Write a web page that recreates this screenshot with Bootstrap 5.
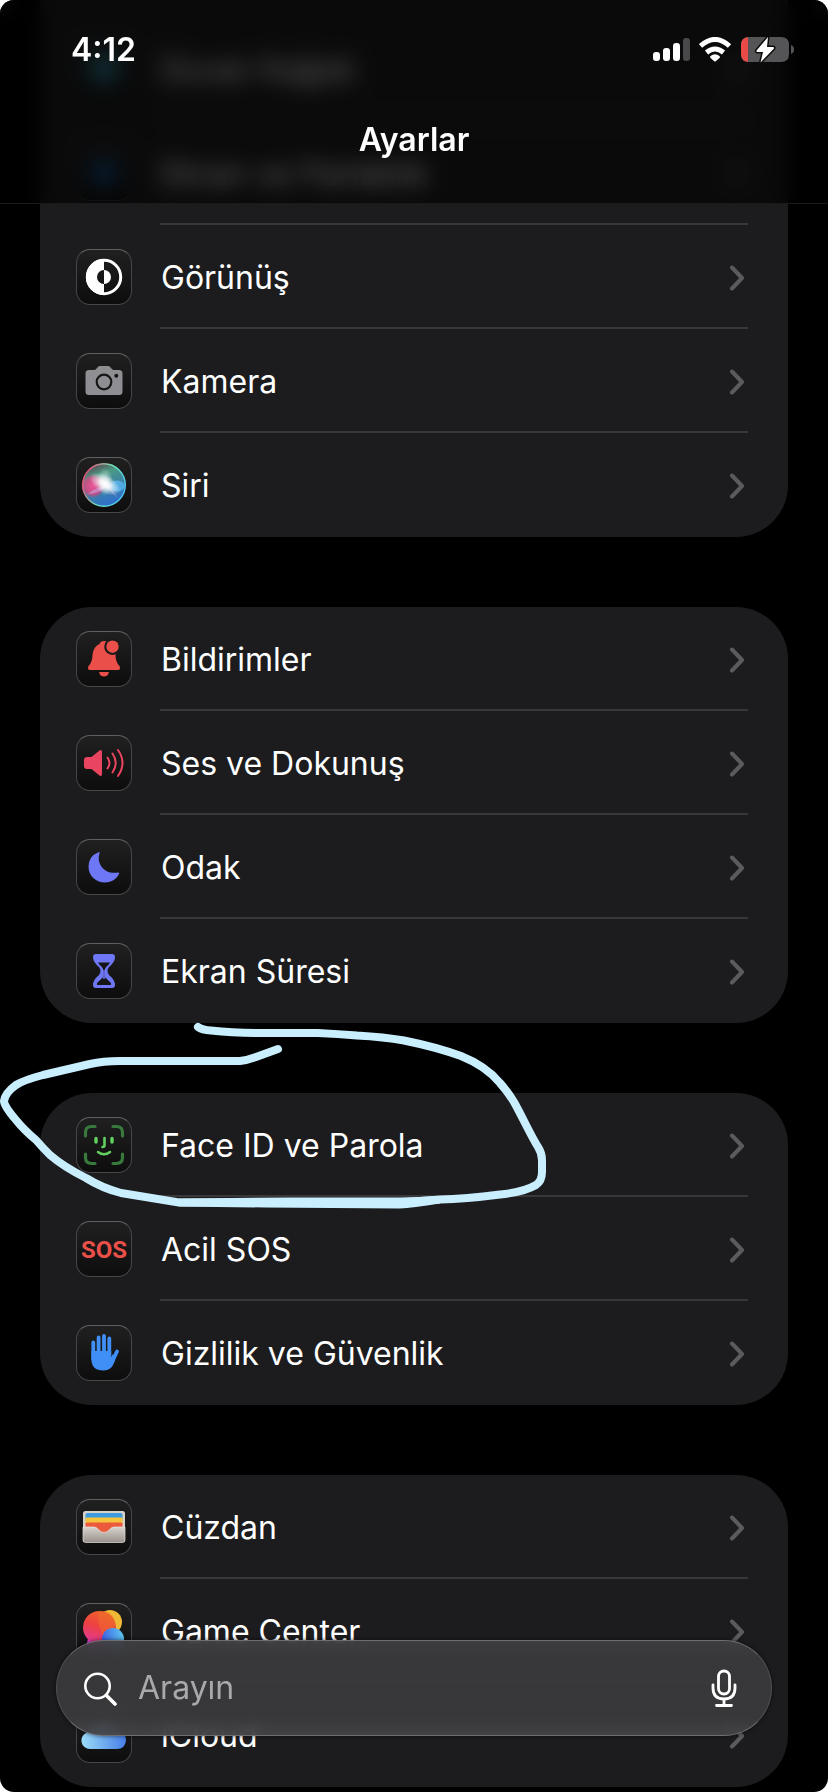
<!DOCTYPE html>
<html lang="tr" data-bs-theme="dark">
<head>
    <meta charset="UTF-8">
    <meta name="viewport" content="width=device-width, initial-scale=1">
    <title>Ayarlar</title>
    <link href="https://cdn.jsdelivr.net/npm/bootstrap@5.3.0/dist/css/bootstrap.min.css" rel="stylesheet">
    <style>
        html { background: #fff; }
        body { background: #fff; font-family: Inter, "Noto Sans", sans-serif; font-size: 32px; line-height: 40px; color: #fff; }
        .screen { background: #000; border-radius: 14px; min-height: 100vh; padding: 0 40px 5px; }
        .topbar { background: rgba(0, 0, 0, .62); -webkit-backdrop-filter: blur(11px); backdrop-filter: blur(11px); border-bottom: 1px solid #1a1a1b; border-radius: 14px 14px 0 0; padding: 30px 33px 43px 71px; }
        .topbar h1 { font-size: 32px; line-height: 40px; font-weight: 600; margin: 50px 38px 0 0; text-align: center; }
        .clock { font-weight: 600; }
        .group { background: #1c1c1e; border-radius: 52px; margin-bottom: 70px; }
        .group-first { border-radius: 0 0 52px 52px; padding-top: 17px; }
        .group-end { margin-bottom: 0; }
        .setting { height: 104px; padding: 0 40px 0 36px; gap: 28px; color: #fff; text-decoration: none; }
        .setting:hover { color: #fff; }
        .setting-body { border-bottom: 2px solid #38383a; padding: 3px 3px 0 1px; }
        .setting:last-child .setting-body { border-color: transparent; }
        .tile { width: 56px; height: 56px; border-radius: 14px; border: 1px solid #464648; border-top-color: #606062; background: linear-gradient(#202020, #0d0d0d); flex: none; }
        .tile svg { display: block; margin: -1px; width: 56px; height: 56px; }
        .sos { font: bold 24px "Liberation Sans Narrow", Roboto, sans-serif; fill: #eb4f49; }
        .marker { position: absolute; left: -40px; top: -77px; pointer-events: none; z-index: 2; }
        .search { height: 96px; margin: 0 56px 56px; padding: 0 33px 0 27px; gap: 21px; border-radius: 48px; border: 1px solid #505052; border-top-color: #6e6e70; border-bottom-color: #6e6e70; background: linear-gradient(rgba(64, 64, 66, .93), rgba(58, 58, 60, .94) 20%, rgba(58, 58, 60, .94) 80%, rgba(68, 68, 70, .93)); -webkit-backdrop-filter: blur(6px); backdrop-filter: blur(6px); box-shadow: 0 0 4px rgba(0, 0, 0, .6); }
        .search input, .search input:focus { background: none; border: 0; box-shadow: none; padding: 0; font-size: 32px; line-height: 40px; color: #fff; }
        .search input::placeholder { color: #a9a9ab; }
        .search button { background: none; border: 0; padding: 0; line-height: 0; }
    </style>
</head>
<body>

<svg width="0" height="0" class="position-absolute">
    <symbol id="chevron" viewBox="0 0 16 26">
        <path d="M3 2.500L13 13L3 23.500" fill="none" stroke="#5b5b5f" stroke-width="4" stroke-linecap="round" stroke-linejoin="round"/>
    </symbol>
</svg>

<header class="topbar fixed-top">
    <div class="d-flex justify-content-between align-items-center">
        <span class="clock">4:12</span>
        <div class="d-flex align-items-center">
            <svg width="46" height="26" viewBox="0 0 46 26" aria-label="Sinyal">
                <g fill="#fff"><rect x="0" y="15" width="7" height="9" rx="3"/><rect x="10" y="11" width="7" height="13" rx="3"/><rect x="20" y="6" width="7" height="18" rx="3"/></g>
                <rect x="30" y="1" width="7" height="23" rx="3" fill="#48484a"/>
            </svg>
            <svg width="42" height="26" viewBox="0 0 42 26" aria-label="Wi-Fi">
                <g fill="none" stroke="#fff" stroke-width="5"><path d="M1.500 9Q16 -4 30.500 9"/><path d="M7.500 15.500Q16 8.500 24.500 15.500"/></g>
                <path d="M11.500 19Q16 15.500 20.500 19Q21.500 20 20.500 21L17 24Q16 25 15 24L11.500 21Q10.500 20 11.500 19Z" fill="#fff"/>
            </svg>
            <svg width="54" height="28" viewBox="0 0 54 28" aria-label="Pil">
                <path d="M8 1H40Q48 1 48 9V18Q48 26 40 26H8Q0 26 0 18V9Q0 1 8 1Z" fill="#555557"/>
                <path d="M7 1V26Q0 25 0 18V9Q0 2 7 1Z" fill="#eb4b47"/>
                <path d="M50 9Q53 10 53 13.500T50 18Z" fill="#555557"/>
                <path d="M27 1L15.500 14.500Q15 16 16.500 16H22L19.500 26.500L33 12.500Q33.500 11 32 11H26Z" fill="#fff" stroke="#0b0b0b" stroke-width="3" paint-order="stroke"/>
            </svg>
        </div>
    </div>
    <h1>Ayarlar</h1>
</header>

<main class="screen">
    <nav class="group group-first" aria-label="Genel">
        <a href="#" class="setting d-flex align-items-center">
            <span class="tile"><svg viewBox="0 0 56 56"><circle cx="28" cy="28" r="15" fill="#317f92"/></svg></span>
            <span class="setting-body d-flex align-items-center justify-content-between flex-grow-1 h-100">Duvar Kağıdı<svg width="16" height="26"><use href="#chevron"/></svg></span>
        </a>
        <a href="#" class="setting d-flex align-items-center">
            <span class="tile"><svg viewBox="0 0 56 56"><circle cx="28" cy="28" r="12" fill="#12589c"/></svg></span>
            <span class="setting-body d-flex align-items-center justify-content-between flex-grow-1 h-100">Ekran ve Parlaklık<svg width="16" height="26"><use href="#chevron"/></svg></span>
        </a>
        <a href="#" class="setting d-flex align-items-center">
            <span class="tile"><svg viewBox="0 0 56 56">
                <circle cx="28" cy="28" r="16.700" fill="none" stroke="#fff" stroke-width="3"/>
                <path d="M28 10A18 18 0 0 0 28 46V35A7 7 0 0 1 28 21Z" fill="#fff"/>
                <path d="M28 21A7 7 0 0 1 28 35Z" fill="#fff"/>
            </svg></span>
            <span class="setting-body d-flex align-items-center justify-content-between flex-grow-1 h-100">Görünüş<svg width="16" height="26"><use href="#chevron"/></svg></span>
        </a>
        <a href="#" class="setting d-flex align-items-center">
            <span class="tile"><svg viewBox="0 0 56 56">
                <path d="M13 17H18Q20 17 21 15Q22 13 24 13H32Q34 13 35 15Q36 17 38 17H43Q46.500 17 46.500 20.500V38.500Q46.500 42 43 42H13Q9.500 42 9.500 38.500V20.500Q9.500 17 13 17Z" fill="#8e8e93"/>
                <circle cx="28" cy="29" r="7.300" fill="none" stroke="#161616" stroke-width="2.200"/>
                <circle cx="40.300" cy="22.700" r="2" fill="#161616"/>
            </svg></span>
            <span class="setting-body d-flex align-items-center justify-content-between flex-grow-1 h-100">Kamera<svg width="16" height="26"><use href="#chevron"/></svg></span>
        </a>
        <a href="#" class="setting d-flex align-items-center">
            <span class="tile"><svg viewBox="0 0 56 56">
                <defs>
                    <linearGradient id="siriBase" x1="0.200" y1="0" x2="0.600" y2="1"><stop offset="0" stop-color="#5f3f4c"/><stop offset=".3" stop-color="#4a9a85"/><stop offset=".65" stop-color="#3b7fa8"/><stop offset="1" stop-color="#2d6fd0"/></linearGradient>
                    <linearGradient id="siriRim" x1="0" y1="0.300" x2="1" y2="0.700"><stop offset="0" stop-color="#f04472"/><stop offset=".5" stop-color="#6fe3b5"/><stop offset="1" stop-color="#4cc3f5"/></linearGradient>
                    <radialGradient id="siriPink"><stop offset="0" stop-color="#f0549a"/><stop offset=".7" stop-color="#d8457f" stop-opacity=".8"/><stop offset="1" stop-color="#d8457f" stop-opacity="0"/></radialGradient>
                    <radialGradient id="siriGlow"><stop offset="0" stop-color="#fff"/><stop offset=".3" stop-color="#fff" stop-opacity=".85"/><stop offset="1" stop-color="#fff" stop-opacity="0"/></radialGradient>
                </defs>
                <circle cx="28" cy="28" r="21.500" fill="url(#siriBase)"/>
                <circle cx="17" cy="29" r="12" fill="url(#siriPink)"/>
                <ellipse cx="41" cy="29" rx="7.500" ry="5.500" fill="#58b6f0" opacity=".8"/>
                <path d="M30 29Q20 30 12 37Q22 37 30 30L42 41L32 28Z" fill="#d3b4ee" opacity=".5"/>
                <ellipse cx="29" cy="27" rx="17" ry="9" fill="url(#siriGlow)" transform="rotate(30 29 27)"/>
                <ellipse cx="29" cy="25" rx="8" ry="14" fill="url(#siriGlow)" opacity=".6"/>
                <circle cx="28" cy="28" r="21.300" fill="none" stroke="url(#siriRim)" stroke-width="1.400"/>
            </svg></span>
            <span class="setting-body d-flex align-items-center justify-content-between flex-grow-1 h-100">Siri<svg width="16" height="26"><use href="#chevron"/></svg></span>
        </a>
    </nav>

    <nav class="group" aria-label="Bildirimler ve odak">
        <a href="#" class="setting d-flex align-items-center">
            <span class="tile"><svg viewBox="0 0 56 56">
                <path d="M28 10Q24.500 10 23.500 13Q17 16 16.500 24Q16.500 31 12.500 35Q11 39 14 39H42Q45 39 43.500 35Q39.500 31 39.500 24V18L32 10.500Q30 10 28 10Z" fill="#eb4f49"/>
                <path d="M23 41H33Q32 45.500 28 45.500T23 41Z" fill="#eb4f49"/>
                <circle cx="36.500" cy="15.700" r="8.300" fill="#1a1a1a"/>
                <circle cx="36.500" cy="15.700" r="6.200" fill="#eb4f49"/>
            </svg></span>
            <span class="setting-body d-flex align-items-center justify-content-between flex-grow-1 h-100">Bildirimler<svg width="16" height="26"><use href="#chevron"/></svg></span>
        </a>
        <a href="#" class="setting d-flex align-items-center">
            <span class="tile"><svg viewBox="0 0 56 56">
                <path d="M11 22H15.500L23.500 15.500Q26 14 26 17V39Q26 42 23.500 40.500L15.500 34H11Q8 34 8 31V25Q8 22 11 22Z" fill="#ea4560"/>
                <g fill="none" stroke="#ea4560" stroke-width="2" stroke-linecap="round"><path d="M31.500 22.500Q35.500 28 31.500 33.500"/><path d="M36.500 18.500Q43 28 36.500 37.500"/><path d="M42 15Q51 28 42 41"/></g>
            </svg></span>
            <span class="setting-body d-flex align-items-center justify-content-between flex-grow-1 h-100">Ses ve Dokunuş<svg width="16" height="26"><use href="#chevron"/></svg></span>
        </a>
        <a href="#" class="setting d-flex align-items-center">
            <span class="tile"><svg viewBox="0 0 56 56">
                <path d="M22.500 13.200Q24 12.700 23.500 14.500C20 25 29 36 42 33.500Q44 33.200 43 35C36 49 12.500 45 12.500 27.500Q12.800 17 22.500 13.200Z" fill="#6e78f7"/>
            </svg></span>
            <span class="setting-body d-flex align-items-center justify-content-between flex-grow-1 h-100">Odak<svg width="16" height="26"><use href="#chevron"/></svg></span>
        </a>
        <a href="#" class="setting d-flex align-items-center">
            <span class="tile"><svg viewBox="0 0 56 56">
                <path d="M20 11H36Q39 11 39 14Q39 19 33 24Q30 28 33 32Q39 37 39 42Q39 45 36 45H20Q17 45 17 42Q17 37 23 32Q26 28 23 24Q17 19 17 14Q17 11 20 11Z" fill="#6e78f7"/>
                <path d="M22 19.500H34Q33 21.500 30.500 23.500Q28.700 25.500 28.700 28V34L35 40V42H21V40L27.300 34V28Q27.300 25.500 25.500 23.500Q23 21.500 22 19.500Z" fill="#151515"/>
                <path d="M28 27V36" stroke="#6e78f7" stroke-width="1.500"/>
            </svg></span>
            <span class="setting-body d-flex align-items-center justify-content-between flex-grow-1 h-100">Ekran Süresi<svg width="16" height="26"><use href="#chevron"/></svg></span>
        </a>
    </nav>

    <div class="position-relative">
        <nav class="group" aria-label="Güvenlik">
            <a href="#" class="setting d-flex align-items-center">
                <span class="tile"><svg viewBox="0 0 56 56">
                    <g fill="none" stroke-linecap="round" stroke-width="3.200">
                        <path d="M9.500 19V15.500Q9.500 9.500 15.500 9.500H19M37 9.500H40.500Q46.500 9.500 46.500 15.500V19M46.500 37V40.500Q46.500 46.500 40.500 46.500H37M19 46.500H15.500Q9.500 46.500 9.500 40.500V37" stroke="#387a3c"/>
                        <path d="M20 21.500V25M36 21.500V25" stroke="#62d35f" stroke-width="3.400"/>
                        <path d="M28.500 21V28Q28.500 30 26.500 30M22 35Q28 39.500 34 35" stroke="#62d35f" stroke-width="2.600"/>
                    </g>
                </svg></span>
                <span class="setting-body d-flex align-items-center justify-content-between flex-grow-1 h-100">Face ID ve Parola<svg width="16" height="26"><use href="#chevron"/></svg></span>
            </a>
            <a href="#" class="setting d-flex align-items-center">
                <span class="tile"><svg viewBox="0 0 56 56"><text x="28" y="37" text-anchor="middle" class="sos">SOS</text></svg></span>
                <span class="setting-body d-flex align-items-center justify-content-between flex-grow-1 h-100">Acil SOS<svg width="16" height="26"><use href="#chevron"/></svg></span>
            </a>
            <a href="#" class="setting d-flex align-items-center">
                <span class="tile"><svg viewBox="0 0 56 56">
                    <g fill="none" stroke="#3f8ff7" stroke-width="3.800" stroke-linecap="round"><path d="M17.300 17.500V34M22.600 12.500V30M28 11V30M33.300 13.500V30"/><path d="M41 26.500L36 37"/></g>
                    <path d="M15.400 26H35.200V32L37 29L39.500 33Q37 45.500 27.500 45.500Q15.400 45.500 15.400 34Z" fill="#3f8ff7"/>
                </svg></span>
                <span class="setting-body d-flex align-items-center justify-content-between flex-grow-1 h-100">Gizlilik ve Güvenlik<svg width="16" height="26"><use href="#chevron"/></svg></span>
            </a>
        </nav>
        <!-- hand-drawn loop around Face ID -->
        <svg class="marker" width="560" height="200" viewBox="0 1016 560 200" fill="none" stroke="#c9efff" stroke-linecap="round" stroke-linejoin="round">
            <path stroke-width="8" d="M198 1027Q202 1030 211 1030.500Q232 1033 257 1033H318Q338 1034 357 1035.500Q384 1037 404 1040.500Q436 1047 461 1056Q486 1066 500 1083Q508 1092 514 1102C524 1120 530 1134 538 1147Q542 1153 542 1160V1172Q542 1181 536 1185Q524 1192 500 1194.500Q465 1199 440 1199.500L400 1202.500L179 1202.500L121 1193Q102 1188 86 1178Q64 1167 50 1155Q42 1147 36 1140Q24 1130 16 1120Q4 1106 4 1101Q5 1093 16 1085Q24 1080 43 1075L90 1064Q103 1061 120 1061H240Q248 1060 256 1057L278 1049"/>
            <path d="M179 1206.500L265 1207.500L400 1208.500Q412 1208 440 1203.500V1196Q420 1197 400 1197.500H290L179 1198.500Z" fill="#c9efff" stroke="none"/>
        </svg>
    </div>

    <nav class="group group-end" aria-label="Servisler">
        <a href="#" class="setting d-flex align-items-center">
            <span class="tile"><svg viewBox="0 0 56 56">
                <defs><linearGradient id="walletFront" x1="0" y1="0" x2="0" y2="1"><stop offset="0" stop-color="#d9d3cd"/><stop offset="1" stop-color="#99928c"/></linearGradient></defs>
                <rect x="7" y="12" width="42" height="31" rx="2.500" fill="#d8d2c8"/>
                <rect x="9.500" y="14" width="37" height="8" rx="1.500" fill="#3f9be0"/>
                <rect x="9.500" y="18.500" width="37" height="7" rx="1" fill="#f5c43c"/>
                <rect x="9.500" y="23.500" width="37" height="12" rx="1" fill="#ec5a3c"/>
                <path d="M7 28H18C22 28 23 33.500 28 33.500S34 28 38 28H49V41Q49 43.500 46.500 43.500H9.500Q7 43.500 7 41Z" fill="url(#walletFront)" stroke="#e8e2dc" stroke-width=".7"/>
            </svg></span>
            <span class="setting-body d-flex align-items-center justify-content-between flex-grow-1 h-100">Cüzdan<svg width="16" height="26"><use href="#chevron"/></svg></span>
        </a>
        <a href="#" class="setting d-flex align-items-center">
            <span class="tile"><svg viewBox="0 0 56 56">
                <defs>
                    <linearGradient id="gcRed" x1="0.600" y1="0" x2="0.300" y2="1"><stop offset="0" stop-color="#f0642c"/><stop offset=".45" stop-color="#ee4140"/><stop offset="1" stop-color="#e0389a"/></linearGradient>
                    <linearGradient id="gcBlue" x1="0" y1="0.500" x2="1" y2="0.300"><stop offset="0" stop-color="#3c5fe6"/><stop offset="1" stop-color="#5cc8ef"/></linearGradient>
                </defs>
                <circle cx="34" cy="19" r="12" fill="#f0b935"/>
                <circle cx="18" cy="40" r="7" fill="#e13be0"/>
                <circle cx="23.500" cy="24.500" r="16.500" fill="url(#gcRed)"/>
                <path d="M23 9A12 12 0 0 1 38 25A16.500 16.500 0 0 1 28 34Q20 22 23 9Z" fill="#f0702a" opacity=".5"/>
                <circle cx="37" cy="36" r="11" fill="url(#gcBlue)"/>
            </svg></span>
            <span class="setting-body d-flex align-items-center justify-content-between flex-grow-1 h-100">Game Center<svg width="16" height="26"><use href="#chevron"/></svg></span>
        </a>
        <a href="#" class="setting d-flex align-items-center">
            <span class="tile"><svg viewBox="0 0 56 56">
                <defs><linearGradient id="cloud"><stop offset="0" stop-color="#9bdcf7"/><stop offset="1" stop-color="#477fe8"/></linearGradient></defs>
                <path d="M14 42A8.500 8.500 0 0 1 11 25.500Q13 20 18 20.500Q22 13 30 14Q39 15 41 24Q50 25 50 33.500Q49 42 41 42Z" fill="url(#cloud)"/>
            </svg></span>
            <span class="setting-body d-flex align-items-center justify-content-between flex-grow-1 h-100">iCloud<svg width="16" height="26"><use href="#chevron"/></svg></span>
        </a>
    </nav>
</main>

<form class="search fixed-bottom d-flex align-items-center" role="search">
    <label for="q" class="lh-1"><svg width="33" height="34" viewBox="0 0 33 34" fill="none" stroke="#fff" stroke-linecap="round" role="img" aria-label="Ara"><circle cx="13.500" cy="14" r="12.200" stroke-width="2.600"/><path d="M22.500 23.500L31 32" stroke-width="3.600"/></svg></label>
    <input type="search" id="q" class="form-control" placeholder="Arayın">
    <button type="button" aria-label="Dikte">
        <svg width="28" height="40" viewBox="0 0 28 40" fill="none" stroke="#fff" stroke-width="2.800" stroke-linecap="round"><rect x="8.500" y="3" width="11" height="23" rx="5.500"/><path d="M3 17V20Q3 31 14 31T25 20V17M14 31V37M6.500 37.500H21.500"/></svg>
    </button>
</form>

<script src="https://cdn.jsdelivr.net/npm/bootstrap@5.3.0/dist/js/bootstrap.bundle.min.js"></script>
</body>
</html>
